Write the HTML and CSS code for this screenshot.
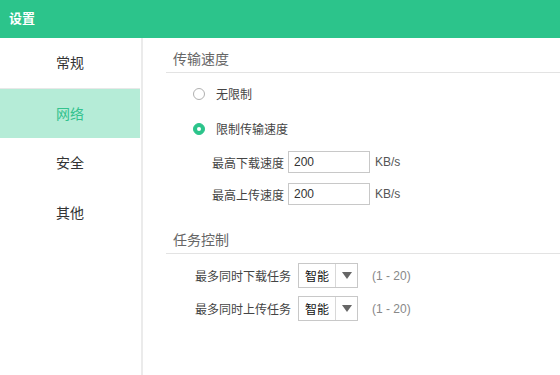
FILE: index.html
```html
<!DOCTYPE html>
<html>
    <head>
        <title>设置</title>
        <link rel="stylesheet" href="styles.css">
    </head>
    <body>
        <div class="header">设置</div>
        <div class="main">
            <div class="sidebar">
                <div class="nav-item">常规</div>
                <div class="nav-item active">网络</div>
                <div class="nav-item">安全</div>
                <div class="nav-item">其他</div>
            </div>
            <div class="content">
                <div class="section-title">传输速度</div>
                <div class="radio-list">
                    <div class="radio-row">
                        <span class="radio"></span>
                        <span>无限制</span>
                    </div>
                    <div class="radio-row">
                        <span class="radio checked"></span>
                        <span>限制传输速度</span>
                    </div>
                </div>
                <div class="speed-row">
                    <span class="speed-label">最高下载速度</span>
                    <input class="speed-input" type="text" value="200">
                    <span class="unit">KB/s</span>
                </div>
                <div class="speed-row">
                    <span class="speed-label">最高上传速度</span>
                    <input class="speed-input" type="text" value="200">
                    <span class="unit">KB/s</span>
                </div>

                <div class="section-title second">任务控制</div>
                <div class="task-list">
                    <div class="task-row">
                        <span class="task-label">最多同时下载任务</span>
                        <div class="select">
                            <span class="select-value">智能</span>
                            <span class="select-arrow"></span>
                        </div>
                        <span class="range">(1 - 20)</span>
                    </div>
                    <div class="task-row">
                        <span class="task-label">最多同时上传任务</span>
                        <div class="select">
                            <span class="select-value">智能</span>
                            <span class="select-arrow"></span>
                        </div>
                        <span class="range">(1 - 20)</span>
                    </div>
                </div>
            </div>
        </div>
    </body>
</html>
```

FILE: styles.css
```css
body{
    margin: 0;
    font-family: "Noto Sans CJK SC", "Liberation Sans", sans-serif;
    font-size: 12px;
    color: #444;
    background-color: white;
    height: 375px;
    display: flex;
    flex-direction: column;
}
.header{
    height: 38px;
    line-height: 36px;
    background-color: #2cc48b;
    color: white;
    font-size: 13px;
    font-weight: bold;
    padding-left: 9px;
}
.main{
    flex: 1;
    display: flex;
}
.sidebar{
    width: 141px;
    border-right: 2px solid #ebebeb;
}
.nav-item{
    height: 50px;
    line-height: 49px;
    text-align: center;
    font-size: 14px;
    color: #333;
    margin-right: 1px;
}
.nav-item.active{
    background-color: #b5ecd7;
    color: #33c28e;
    border-top: 1px solid #e8e8e8;
    height: 49px;
    line-height: 48px;
}
.content{
    flex: 1;
    padding-left: 23px;
}
.section-title{
    margin-top: 8px;
    height: 26px;
    line-height: 25px;
    padding-left: 7px;
    font-size: 14px;
    color: #666;
    border-bottom: 1px solid #e3e3e3;
}
.section-title.second{
    margin-top: 17px;
}
.radio-list{
    margin-top: 3px;
    padding-left: 27px;
}
.radio-row{
    height: 35px;
    display: flex;
    align-items: center;
    gap: 11px;
    color: #444;
}
.radio{
    width: 10px;
    height: 10px;
    border-radius: 50%;
    border: 1px solid #b0b0b0;
    display: flex;
    justify-content: center;
    align-items: center;
}
.radio.checked{
    background-color: #2cc48b;
    border-color: #2cc48b;
}
.radio.checked::after{
    content: "";
    width: 4px;
    height: 4px;
    border-radius: 50%;
    background-color: white;
}
.speed-row{
    height: 32px;
    display: flex;
    align-items: center;
}
.speed-label{
    width: 118px;
    text-align: right;
}
.speed-input{
    margin-left: 4px;
    width: 70px;
    height: 20px;
    padding: 0 5px;
    border: 1px solid #c8c8c8;
    font-family: "Liberation Sans", sans-serif;
    font-size: 12px;
    color: #333;
    outline: none;
}
.unit{
    margin-left: 5px;
    font-family: "Liberation Sans", sans-serif;
    color: #555;
}
.task-list{
    margin-top: 5px;
}
.task-row{
    height: 33px;
    display: flex;
    align-items: center;
}
.task-label{
    width: 125px;
    text-align: right;
}
.select{
    margin-left: 7px;
    width: 58px;
    height: 23px;
    border: 1px solid #c8c8c8;
    display: flex;
}
.select-value{
    width: 36px;
    line-height: 23px;
    text-align: center;
    color: #111;
}
.select-arrow{
    flex: 1;
    border-left: 1px solid #d8d8d8;
    display: flex;
    justify-content: center;
    align-items: center;
}
.select-arrow::after{
    content: "";
    border-left: 5px solid transparent;
    border-right: 5px solid transparent;
    border-top: 7px solid #666;
}
.range{
    margin-left: 14px;
    font-family: "Liberation Sans", sans-serif;
    color: #888;
}
```
